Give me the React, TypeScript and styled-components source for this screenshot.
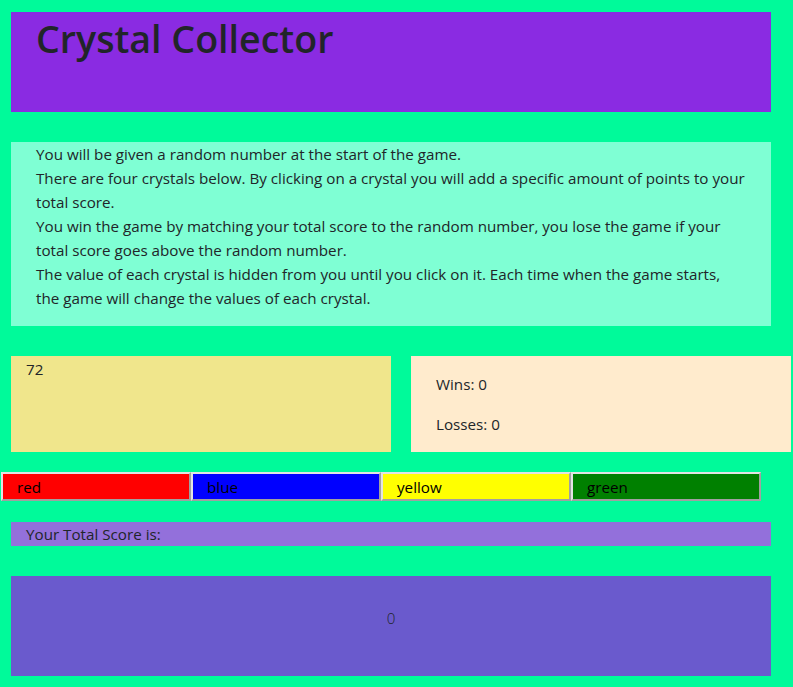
import React from "react";
import styled, { createGlobalStyle } from "styled-components";

const Global = createGlobalStyle`
  html, body {
    margin: 0;
    padding: 0;
    background: #00fa9a;
  }
  body {
    font-family: "Open Sans", "Noto Sans", sans-serif;
    font-size: 15.2px;
    line-height: 24px;
    color: #212529;
  }
  * { box-sizing: border-box; }
`;

const Page = styled.div`
  padding-top: 12px;
  width: 793px;
`;

const Header = styled.header`
  margin-left: 11px;
  width: 760px;
  height: 100px;
  background: #8a2be2;
  padding: 3px 25px 0;
`;

const Title = styled.h1`
  margin: 0;
  font-size: 37.6px;
  font-weight: 600;
  line-height: 48px;
`;

const Instructions = styled.section`
  display: flow-root;
  margin: 30px 0 0 11px;
  width: 760px;
  background: #7fffd4;
  padding: 0 26px 0 25px;
`;

const Para = styled.p`
  margin: 0 0 16px;
`;

const Row = styled.div`
  margin: 30px 0 0 11px;
  display: grid;
  grid-template-columns: 380px 380px;
  column-gap: 20px;
`;

const Target = styled.div`
  height: 96px;
  background: #f0e68c;
  padding: 1px 15px 0;
`;

const Tally = styled.div`
  height: 96px;
  background: #ffebcd;
  padding: 16px 25px 0;
`;

const Crystals = styled.div`
  margin: 20px 0 0 1px;
  display: flex;
`;

const Crystal = styled.button<{ $bg: string }>`
  width: 190px;
  height: 29px;
  background: ${(p) => p.$bg};
  border-style: solid;
  border-width: 2px;
  border-color: #e3e3e3 #a0a0a0 #a0a0a0 #e3e3e3;
  padding: 0 14px;
  text-align: left;
  font-family: "Open Sans", "Noto Sans", sans-serif;
  font-size: 15.2px;
  color: #000;
  cursor: pointer;
`;

const ScoreLabel = styled.div`
  margin: 21px 0 0 11px;
  width: 760px;
  height: 24px;
  background: #9370db;
  padding: 0 15px;
`;

const ScoreBox = styled.div`
  margin: 30px 0 0 11px;
  width: 760px;
  height: 100px;
  background: #6a5acd;
  padding-top: 30px;
  text-align: center;
  font-weight: 300;
`;

const crystals = [
  { name: "red", color: "#ff0000" },
  { name: "blue", color: "#0000ff" },
  { name: "yellow", color: "#ffff00" },
  { name: "green", color: "#008000" },
];

export default function App() {
  return (
    <Page>
      <Global />
      <Header>
        <Title>Crystal Collector</Title>
      </Header>
      <Instructions>
        <Para>
          You will be given a random number at the start of the game.
          <br />
          There are four crystals below. By clicking on a crystal you will add a specific amount of points to your total score.
          <br />
          You win the game by matching your total score to the random number, you lose the game if your total score goes above the random number.
          <br />
          The value of each crystal is hidden from you until you click on it. Each time when the game starts, the game will change the values of each crystal.
        </Para>
      </Instructions>
      <Row>
        <Target>72</Target>
        <Tally>
          <Para>Wins: 0</Para>
          <Para>Losses: 0</Para>
        </Tally>
      </Row>
      <Crystals>
        {crystals.map((c) => (
          <Crystal key={c.name} $bg={c.color}>
            {c.name}
          </Crystal>
        ))}
      </Crystals>
      <ScoreLabel>Your Total Score is:</ScoreLabel>
      <ScoreBox>0</ScoreBox>
    </Page>
  );
}
